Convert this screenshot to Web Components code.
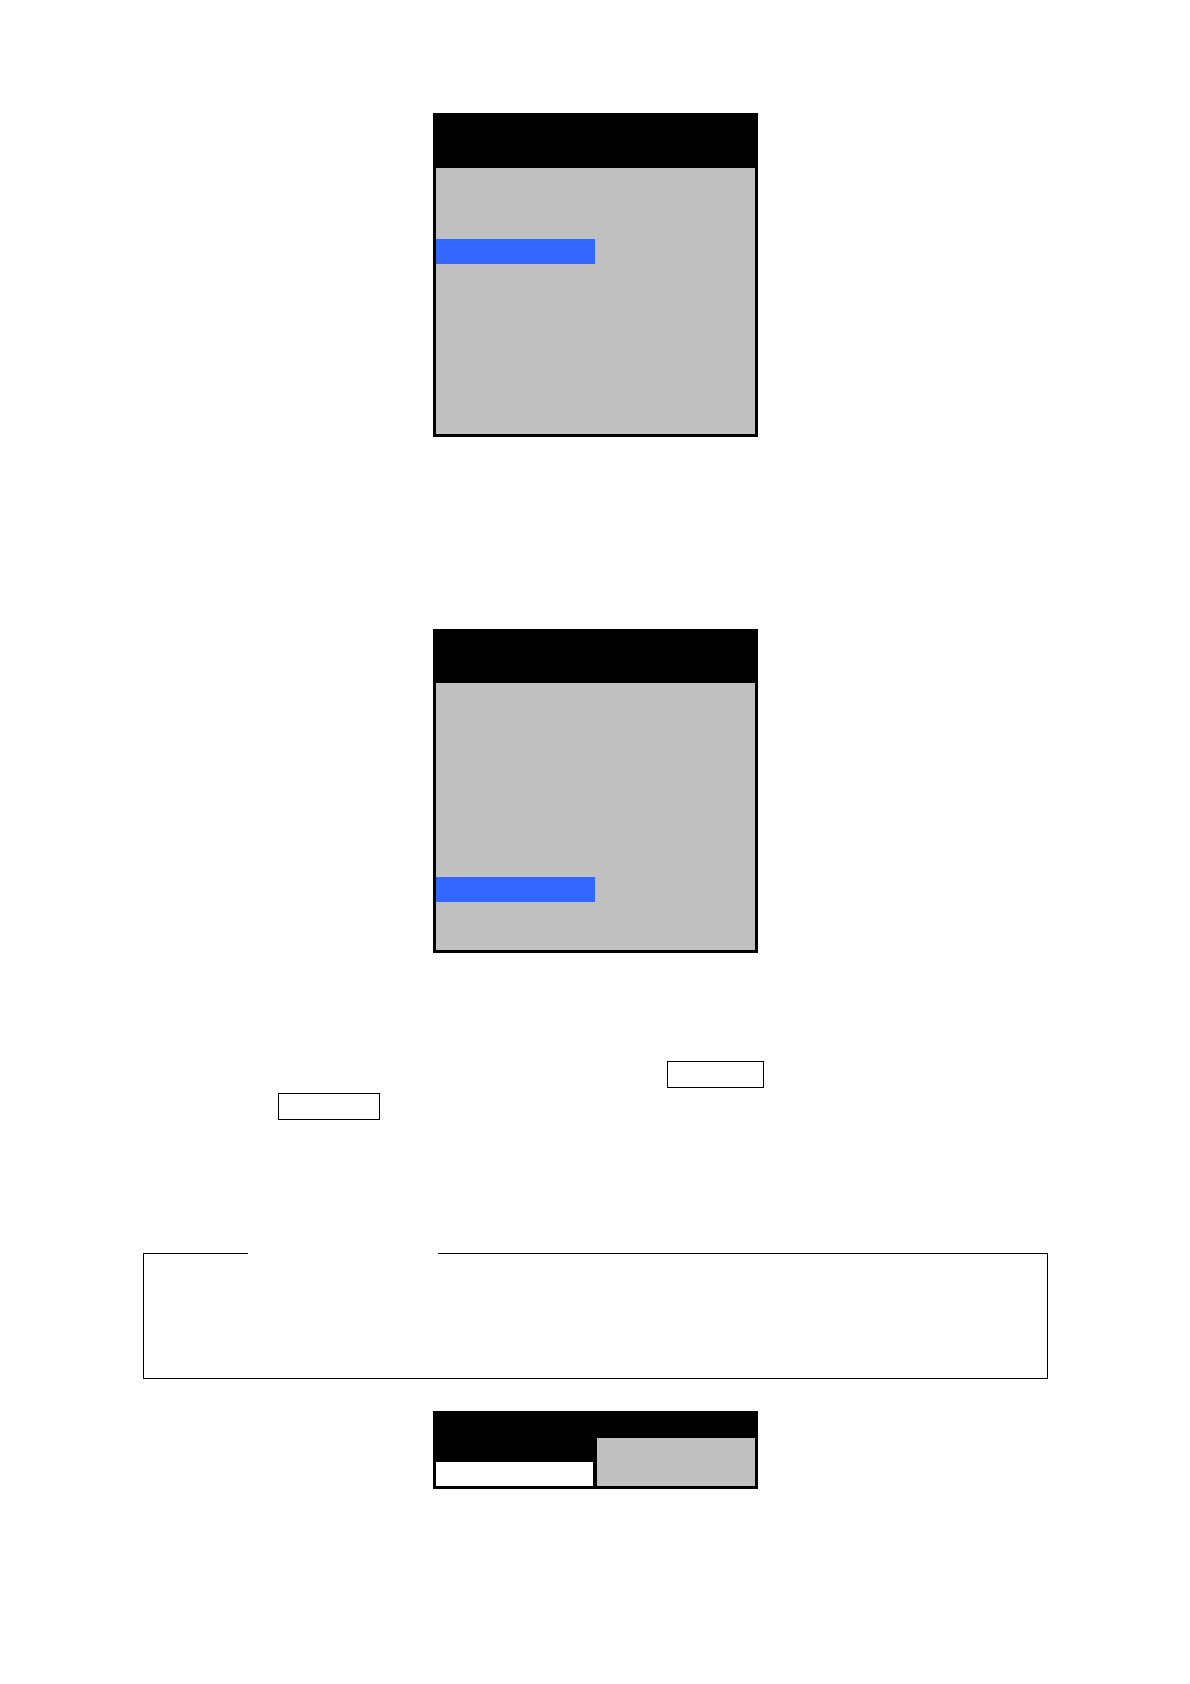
<!DOCTYPE html>
<html lang="en">
<head>
<meta charset="utf-8">
<meta name="viewport" content="width=device-width, initial-scale=1">
<title>Document</title>
<style>
  body {
    margin: 0;
    background: #fff;
    font-family: "Liberation Sans", sans-serif;
  }
</style>
</head>
<body>
<doc-page>
  <menu-screen header="52" before="71" after="170"></menu-screen>
  <menu-screen class="second" header="51" before="194" after="48"></menu-screen>
  <key-lines>
    <key-cap style="--key-width: 97px"></key-cap>
    <key-cap slot="next" style="--key-width: 102px"></key-cap>
  </key-lines>
  <note-box></note-box>
  <split-screen></split-screen>
</doc-page>

<script>
const define = (name, html, base = class extends HTMLElement {}) => {
  const template = document.createElement('template')
  template.innerHTML = html

  customElements.define(name, class extends base {
    constructor() {
      super()
      this.attachShadow({ mode: 'open' }).append(template.content.cloneNode(true))
    }
  })
}

define('doc-page', `
  <style>
    :host {
      display: flex;
      flex-direction: column;
      padding: 113px 142px 195px 143px;
    }

    ::slotted(menu-screen), ::slotted(split-screen) {
      align-self: center;
    }

    ::slotted(.second) {
      margin-top: 192px;
    }

    ::slotted(key-lines) {
      margin-top: 108px;
    }

    ::slotted(note-box) {
      margin-top: 122px;
    }

    ::slotted(split-screen) {
      margin-top: 32px;
    }
  </style>
  <slot></slot>
`)

// Screen with a title bar and one selected row, the attributes are row heights
class MenuScreen extends HTMLElement {
  static get observedAttributes() {
    return ['header', 'before', 'after']
  }

  attributeChangedCallback(attributeName, oldValue, newValue) {
    this.shadowRoot.querySelector(`.${attributeName}`).style.height = `${newValue}px`
  }
}

define('menu-screen', `
  <style>
    :host {
      display: block;
      box-sizing: border-box;
      width: 325px;
      max-width: 100%;
      border: 3px solid #000;
      background: #c0c0c0;
    }

    .header {
      background: #000;
    }

    .selected {
      width: 159px;
      height: 25px;
      background: #36f;
    }
  </style>
  <div class="header"></div>
  <div class="before"></div>
  <div class="selected"></div>
  <div class="after"></div>
`, MenuScreen)

define('key-cap', `
  <style>
    :host {
      display: block;
      width: var(--key-width);
    }

    kbd {
      display: block;
      box-sizing: border-box;
      height: 27px;
      border: 1px solid #000;
    }
  </style>
  <kbd><slot></slot></kbd>
`)

define('key-lines', `
  <style>
    :host {
      display: flex;
      flex-direction: column;
      gap: 5px;
      padding-left: 135px;
    }

    .line {
      display: flex;
    }

    .first {
      padding-left: 389px;
    }
  </style>
  <div class="line first"><slot></slot></div>
  <div class="line"><slot name="next"></slot></div>
`)

define('note-box', `
  <style>
    :host {
      display: block;
    }

    fieldset {
      box-sizing: border-box;
      height: 137px;
      margin: 0;
      padding: 0;
      border: 1px solid #000;
    }

    legend {
      width: 190px;
      height: 23px;
      margin-left: 104px;
      padding: 0;
    }
  </style>
  <fieldset>
    <legend><slot name="title"></slot></legend>
    <slot></slot>
  </fieldset>
`)

define('split-screen', `
  <style>
    :host {
      display: grid;
      grid-template-columns: 157px 158px;
      grid-template-rows: 24px 24px;
      column-gap: 4px;
      padding: 27px 3px 3px;
      background: #000;
    }

    .field {
      grid-row: 2;
      background: #fff;
    }

    .value {
      grid-row: 1 / 3;
      grid-column: 2;
      background: #c0c0c0;
    }
  </style>
  <div class="field"></div>
  <div class="value"></div>
`)
</script>
</body>
</html>
